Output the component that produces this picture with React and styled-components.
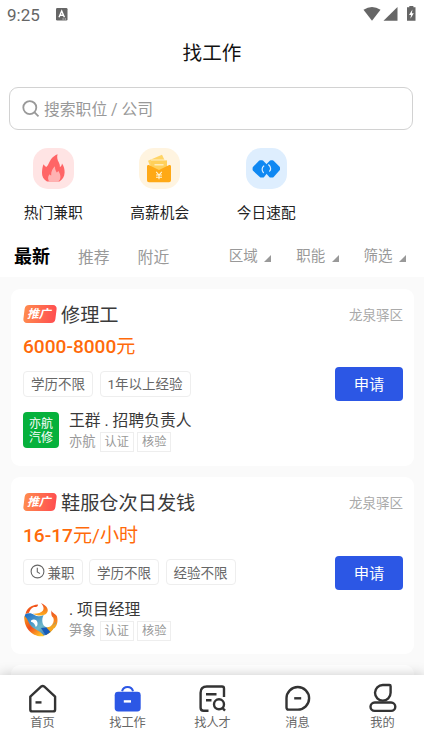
import React from "react";
import styled, { createGlobalStyle } from "styled-components";

const shortcuts = [
  { label: "热门兼职", color: "#ffe4e4", icon: "fire" },
  { label: "高薪机会", color: "#fff4e0", icon: "wallet" },
  { label: "今日速配", color: "#deeefe", icon: "match" },
];

const filters = ["区域", "职能", "筛选"];

const jobs = [
  {
    title: "修理工",
    area: "龙泉驿区",
    amount: "6000-8000",
    unit: "元",
    tags: ["学历不限", "1年以上经验"],
    contact: "王群 . 招聘负责人",
    company: "亦航",
    logo: "text",
  },
  {
    title: "鞋服仓次日发钱",
    area: "龙泉驿区",
    amount: "16-17",
    unit: "元/小时",
    partTime: true,
    tags: ["学历不限", "经验不限"],
    contact: ". 项目经理",
    company: "笋象",
    logo: "swirl",
  },
];

const navItems = [
  { label: "首页", icon: "home" },
  { label: "找工作", icon: "bag" },
  { label: "找人才", icon: "talent" },
  { label: "消息", icon: "chat" },
  { label: "我的", icon: "mine" },
];

const shortcutIcons = {
  fire: (
    <svg width="41" height="41" viewBox="0 0 41 41">
      <path
        d="M14 33.5C10.5 31.5 8.8 28.4 9 24.5C9.1 21 9.6 18.7 10.5 16.2C11.4 17.5 12.2 18.3 13.3 19C16 16.5 15.8 14.2 18 11.2C19.8 8.8 22.2 7.2 24.6 6.2C23.7 9.2 24.3 11.4 25.6 14C26.4 15.6 27 17 26.9 19C28.2 18.2 28.7 17.1 29 15.4C30.8 18 31.8 21.2 31.6 24.6C31.4 28.8 29.7 31.7 26.5 33.5Z"
        fill="#ff6566"
      />
      <path
        d="M16.5 33.8C14.6 32.2 14.6 28.8 16.4 26.3C17 27 17.4 27.2 18.2 27.4C17.8 23.4 19.6 20.5 22 18.2C21.8 21.3 22.8 22.5 23.8 24.5C24.6 24.1 25 23.5 25.2 22.8C28.3 27.3 28.2 31.6 25 33.8Z"
        fill="#ffb2b2"
      />
    </svg>
  ),
  wallet: (
    <svg width="41" height="41" viewBox="0 0 41 41">
      <path d="M9 12.8L23 6.7L27 15L11 18Z" fill="#ffd465" />
      <path d="M12 12H28V23H12Z" fill="#ffd05a" />
      <path d="M12 12H28" stroke="#fff4e0" strokeWidth=".8" />
      <path d="M15.5 16.8H24.5" stroke="#fff0c8" strokeWidth="1.3" />
      <path
        d="M8 18.5C8 17.2 9.2 16.6 10.3 17.3L20 22L29.7 17.3C30.8 16.6 32 17.2 32 18.5V32C32 33.5 31.2 34.2 30 34.2H10C8.8 34.2 8 33.5 8 32Z"
        fill="#ffa916"
      />
      <path
        d="M17.2 23.8L20 27L22.8 23.8M20 27V31.3M17 27H23M17 29.3H23"
        fill="none"
        stroke="#fff6dc"
        strokeWidth="1.1"
      />
    </svg>
  ),
  match: (
    <svg width="41" height="41" viewBox="0 0 41 41" strokeLinejoin="round">
      <path
        d="M14 13.6H16L23 20.7L17 28.2H15L8 21.8V20Z"
        fill="#0f88f2"
        stroke="#0f88f2"
        strokeWidth="2.8"
      />
      <path
        d="M24.8 13.6H26.6L32.6 19.8V21.4L26.4 28.2H24.6L18 20.8Z"
        fill="#0f88f2"
        stroke="#0f88f2"
        strokeWidth="2.8"
      />
      <path
        d="M17.8 18C15.8 19.4 15.5 22.2 17.4 24.6M22.6 16.8C25 19 25.2 21.6 23.6 23.2"
        fill="none"
        stroke="#deeefe"
        strokeWidth="1.2"
        strokeLinecap="round"
      />
    </svg>
  ),
};

const navIcons = {
  home: (
    <>
      <path d="M3.3 13.6L14.3 3.4Q15.7 2.4 17.1 3.4L28.1 13.6V26.4Q28.1 28.4 26.1 28.4H5.3Q3.3 28.4 3.3 26.4Z" />
      <path d="M8.5 19.4H14.5" />
    </>
  ),
  bag: (
    <>
      <path d="M10.1 8.2A5.6 5.6 0 0 1 21 8.2" stroke="#2c57e5" strokeWidth="2" strokeLinecap="butt" />
      <rect x="2.7" y="8.8" width="26" height="19.6" rx="3.4" fill="#2c57e5" stroke="none" />
      <path d="M11.8 18.4H19" stroke="#fff" />
    </>
  ),
  talent: (
    <>
      <path d="M11.5 27.7H6.6Q3.6 27.7 3.6 24.7V9.8Q3.6 3.5 9.9 3.5H25Q27 3.5 27 5.5V14" />
      <path d="M9 11.3H19.5M9 17.3H14.5" />
      <circle cx="22" cy="21.3" r="5" />
      <path d="M25.4 25L28 27.7" />
    </>
  ),
  chat: (
    <>
      <path d="M15.8 4A11.3 11.3 0 1 1 15.8 26.6H6.5Q4.5 26.6 4.5 24.6V15.3A11.3 11.3 0 0 1 15.8 4Z" />
      <path d="M12.2 15.3H19.2" />
    </>
  ),
  mine: (
    <>
      <path d="M15.8 2H22.4Q23.6 2 23.6 3.2V9.8A7.8 7.8 0 1 1 15.8 2Z" />
      <rect x="3.5" y="19.5" width="24.8" height="8.4" rx="4.2" />
    </>
  ),
};

const StatusIcons = () => (
  <svg width="56" height="20" viewBox="0 0 56 20" fill="#666">
    <path d="M0.5 4.8Q9 -1 17.5 4.8L9 15.8Z" transform="translate(0 1)" />
    <path d="M20.5 16.8L34.5 3V16.8Z" />
    <path d="M46.3 2H50.4V3.2H52.5V16.7H44V3.2H46.3Z" />
    <path d="M49.4 5.5L46 11H48L47.4 14.7L50.8 9.3H48.9Z" fill="#fff" />
  </svg>
);

const SwirlLogo = () => (
  <svg width="36" height="36" viewBox="0 0 36 36">
    <defs>
      <linearGradient id="flame" x1="0" y1="0" x2=".8" y2="1">
        <stop offset="0" stopColor="#f5a11b" />
        <stop offset=".5" stopColor="#f14b1c" />
        <stop offset="1" stopColor="#ffc629" />
      </linearGradient>
      <linearGradient id="horn" x1="0" y1="0" x2="0" y2="1">
        <stop offset="0" stopColor="#ed4b1f" />
        <stop offset="1" stopColor="#ffb01f" />
      </linearGradient>
      <linearGradient id="wave" x1="0" y1="0" x2="1" y2="1">
        <stop offset="0" stopColor="#1769c7" />
        <stop offset=".55" stopColor="#6fb8c8" />
        <stop offset="1" stopColor="#1550b0" />
      </linearGradient>
    </defs>
    <path d="M2.5 12C4 6 8 3.2 15 2.6C15 4.5 14 5.4 12 5C9 5 7 7.6 6 11Z" fill="url(#flame)" />
    <path d="M18 1C24.5 4 26.5 8.5 23.4 11.5C20.4 14.3 13.8 14 9.8 11.7C14 11.9 18 11.2 19.8 8.8C21.4 6.5 20.4 3.7 18 1Z" fill="url(#horn)" />
    <path d="M28.5 8.2C29.2 11 31.5 11 33.8 14C35.3 19 34.4 23 31.5 26.2L27.4 24.5C30.3 21.8 31.5 18.7 30.3 15.7C28.7 14.5 27.8 12.4 28.5 8.2Z" fill="url(#horn)" />
    <path d="M2 12.5C5.3 10.7 8.4 11 11.4 13C14.5 14.8 17.8 14.4 20.7 13C18.2 17.4 19 24 23.5 25.2C27 26.2 29.5 24.2 33 20C31.4 28 24.7 33.7 18 34L5 23C2.2 20 1 16 2 12.5Z" fill="url(#wave)" />
    <path d="M1.4 13.7C5.3 17.2 5.8 22.3 9.3 25.2C13.6 28.3 18 29.3 21.3 34C10 36 .2 26 1.4 13.7Z" fill="url(#flame)" />
    <path d="M19 27L25 25.3Q29 24.6 33.2 21Q30.7 29.6 23 33Z" fill="#f8a61e" />
    <path d="M18 26L23.4 25.5L27.5 30L22.7 33.3Z" fill="#155bb9" />
    <path d="M8 18.5C10.5 16.4 14.2 17.6 14.5 20.7C14.8 22.8 14 24.2 12.8 25C12 22.6 11 20.2 8 19.7Z" fill="#fff" />
  </svg>
);

const JobCard = ({ job }) => (
  <Card>
    <CardHeader>
      <Promo>
        <span>推广</span>
      </Promo>
      <JobTitle>{job.title}</JobTitle>
      <Area>{job.area}</Area>
    </CardHeader>
    <Salary>
      <b>{job.amount}</b>
      {job.unit}
    </Salary>
    <TagRow>
      {job.partTime && (
        <Tag>
          <svg width="15" height="15" viewBox="0 0 15 15" fill="none" stroke="#666" strokeWidth="1.1">
            <circle cx="7.5" cy="7.5" r="6.4" />
            <path d="M7.3 3.8V8L10 9.6" />
          </svg>
          兼职
        </Tag>
      )}
      {job.tags.map((tag) => (
        <Tag key={tag}>{tag}</Tag>
      ))}
      <ApplyButton>申请</ApplyButton>
    </TagRow>
    <Recruiter>
      {job.logo === "text" ? (
        <TextLogo>
          亦航
          <br />
          汽修
        </TextLogo>
      ) : (
        <SwirlLogo />
      )}
      <div>
        <Contact>{job.contact}</Contact>
        <Company>
          <CompanyName>{job.company}</CompanyName>
          <Badge>认证</Badge>
          <Badge>核验</Badge>
        </Company>
      </div>
    </Recruiter>
  </Card>
);

const App = () => {
  return (
    <Screen>
      <GlobalStyle />
      <StatusBar>
        <Clock>9:25</Clock>
        <svg width="12" height="13" viewBox="0 0 12 13">
          <rect width="11.5" height="12.5" rx="1.2" fill="#666" />
          <path d="M3 9.2L5.7 3L8.4 9.2M4 7.2H7.4" fill="none" stroke="#fff" strokeWidth="1.4" />
          <path d="M6.5 11H7.7M8.7 11H9.9" stroke="#fff" strokeWidth=".8" />
        </svg>
        <StatusIcons />
      </StatusBar>
      <PageTitle>找工作</PageTitle>
      <SearchBox>
        <svg width="18" height="18" viewBox="0 0 18 18" fill="none" stroke="#999" strokeWidth="1.8">
          <circle cx="7.8" cy="7.6" r="6.5" />
          <path d="M12.3 12.2L16.5 16.4" />
        </svg>
        搜索职位 / 公司
      </SearchBox>
      <Shortcuts>
        {shortcuts.map((item) => (
          <Shortcut key={item.label}>
            <ShortcutIcon $color={item.color}>{shortcutIcons[item.icon]}</ShortcutIcon>
            {item.label}
          </Shortcut>
        ))}
      </Shortcuts>
      <TabBar>
        <Tab $active>最新</Tab>
        <Tab>推荐</Tab>
        <Tab>附近</Tab>
        <Filters>
          {filters.map((name) => (
            <Filter key={name}>{name}</Filter>
          ))}
        </Filters>
      </TabBar>
      <JobList>
        {jobs.map((job) => (
          <JobCard key={job.title} job={job} />
        ))}
        <Card />
      </JobList>
      <BottomNav>
        {navItems.map((item) => (
          <NavItem key={item.label}>
            <svg
              width="31"
              height="31"
              viewBox="0 0 31 31"
              fill="none"
              stroke="#333"
              strokeWidth="2.4"
              strokeLinejoin="round"
            >
              {navIcons[item.icon]}
            </svg>
            {item.label}
          </NavItem>
        ))}
      </BottomNav>
    </Screen>
  );
};

export default App;

const GlobalStyle = createGlobalStyle`
  * {
    box-sizing: border-box;
  }
  body {
    margin: 0;
    overflow: hidden;
    font-family: Roboto, "Noto Sans CJK SC", sans-serif;
  }
  svg {
    flex: none;
    display: block;
  }
`;

const Screen = styled.div`
  display: flex;
  flex-direction: column;
  width: 424px;
  height: 755px;
  background: #fff;
  overflow: hidden;
`;

const StatusBar = styled.div`
  display: flex;
  align-items: center;
  flex: none;
  height: 29px;
  padding: 0 7px;
  color: #666;

  svg:last-child {
    margin-left: auto;
    margin-top: -1px;
    margin-right: -2px;
  }
`;

const Clock = styled.span`
  width: 49px;
  font-size: 17px;
`;

const PageTitle = styled.h1`
  flex: none;
  margin: 0;
  height: 58px;
  line-height: 50px;
  text-align: center;
  font-size: 19.6px;
  font-weight: 400;
  color: #111;
`;

const SearchBox = styled.div`
  display: flex;
  align-items: center;
  flex: none;
  gap: 4px;
  height: 43px;
  margin: 0 11px 0 9px;
  padding-left: 12px;
  border: 1px solid #d2d2d2;
  border-radius: 9px;
  font-size: 15.8px;
  color: #999;
`;

const Shortcuts = styled.div`
  display: grid;
  grid-template-columns: repeat(4, 106.5px);
  flex: none;
  height: 106px;
  padding-top: 18px;
`;

const Shortcut = styled.div`
  display: flex;
  flex-direction: column;
  align-items: center;
  gap: 13px;
  font-size: 14.7px;
  line-height: 22px;
  color: #222;
`;

const ShortcutIcon = styled.div`
  width: 41px;
  height: 41px;
  border-radius: 15px;
  background: ${({ $color }) => $color};
`;

const TabBar = styled.div`
  display: flex;
  align-items: center;
  flex: none;
  gap: 28px;
  height: 41px;
  padding: 0 18px 0 14px;
`;

const Tab = styled.span`
  padding-bottom: ${({ $active }) => ($active ? "3px" : "1px")};
  font-size: ${({ $active }) => ($active ? "18px" : "15.8px")};
  font-weight: ${({ $active }) => ($active ? 700 : 400)};
  color: ${({ $active }) => ($active ? "#000" : "#999")};
`;

const Filters = styled.div`
  display: flex;
  gap: 25px;
  margin-left: auto;
`;

const Filter = styled.span`
  display: flex;
  align-items: center;
  gap: 6.4px;
  font-size: 14.5px;
  line-height: 20px;
  color: #999;

  &::after {
    content: "";
    margin-top: 4px;
    border-left: 7px solid transparent;
    border-bottom: 7px solid #999;
  }
`;

const JobList = styled.div`
  display: flex;
  flex-direction: column;
  flex: 1;
  gap: 11px;
  min-height: 0;
  padding: 12px 10px 0 11px;
  background: #fafafa;
  overflow: hidden;
`;

const Card = styled.div`
  flex: none;
  height: 177px;
  padding: 12px 11px 0 12px;
  border-radius: 9px;
  background: #fff;

  & + & {
    padding-top: 12.7px;
  }
`;

const CardHeader = styled.div`
  display: flex;
  align-items: center;
  height: 27px;
`;

const Promo = styled.span`
  display: grid;
  place-items: center;
  width: 32px;
  height: 18px;
  margin: -2px 5.5px 0 0.5px;
  border-radius: 4px;
  background: linear-gradient(90deg, #ff8a4e, #ff4e50);
  transform: skewX(-7deg);
  font-size: 11.8px;
  font-weight: 700;
  line-height: 18px;
  color: #fff;

  span {
    transform: skewX(-8deg);
  }
`;

const JobTitle = styled.h2`
  margin: 1px 0 0;
  font-size: 19.2px;
  font-weight: 400;
  line-height: 27px;
  color: #3a3a3a;
`;

const Area = styled.span`
  margin: -2px 0 0 auto;
  font-size: 13.5px;
  color: #aaa;
`;

const Salary = styled.div`
  height: 39px;
  line-height: 38px;
  font-size: 19.1px;
  color: #ff6a0a;

  b {
    font-weight: 500;
  }
`;

const TagRow = styled.div`
  display: flex;
  align-items: center;
  gap: 6.5px;
  height: 34px;
`;

const Tag = styled.span`
  display: flex;
  align-items: center;
  gap: 3px;
  height: 26px;
  margin-top: -1px;
  padding: 0 7px 1px;
  border: 1px solid #eee;
  border-radius: 4px;
  font-size: 13.5px;
  color: #666;

  svg {
    margin: 0 -0.5px 0 -1px;
  }
`;

const ApplyButton = styled.button`
  width: 68px;
  height: 34px;
  margin-left: auto;
  padding: 0 0 2px;
  border: 0;
  border-radius: 4px;
  background: #2c57e5;
  font-family: inherit;
  font-size: 15.3px;
  color: #fff;
`;

const Recruiter = styled.div`
  display: flex;
  align-items: center;
  gap: 10px;
  height: 44px;
  margin-top: 8px;
`;

const TextLogo = styled.div`
  width: 36px;
  height: 36px;
  margin-top: -2px;
  padding-top: 6px;
  border-radius: 4px;
  background: #06b13c;
  text-align: center;
  font-size: 12px;
  line-height: 13.5px;
  color: #fff;
`;

const Contact = styled.div`
  font-size: 15.8px;
  line-height: 22px;
  color: #3a3a3a;
`;

const Company = styled.div`
  display: flex;
  align-items: center;
  gap: 3px;
  height: 20px;
  font-size: 13.3px;
  color: #999;
`;

const CompanyName = styled.span`
  margin-top: -3px;
  padding-right: 1px;
`;

const Badge = styled.span`
  padding: 0 4px;
  border: 1px solid #eee;
  font-size: 12.2px;
  line-height: 18px;
`;

const BottomNav = styled.nav`
  position: relative;
  display: grid;
  grid-template-columns: repeat(5, 85px);
  flex: none;
  height: 80px;
  padding-top: 8px;
  background: #fff;
  box-shadow: 0 0 12px rgba(0, 0, 0, 0.22);
`;

const NavItem = styled.div`
  display: flex;
  flex-direction: column;
  align-items: center;
  font-size: 12.2px;
  line-height: 19px;
  color: #666;
`;
